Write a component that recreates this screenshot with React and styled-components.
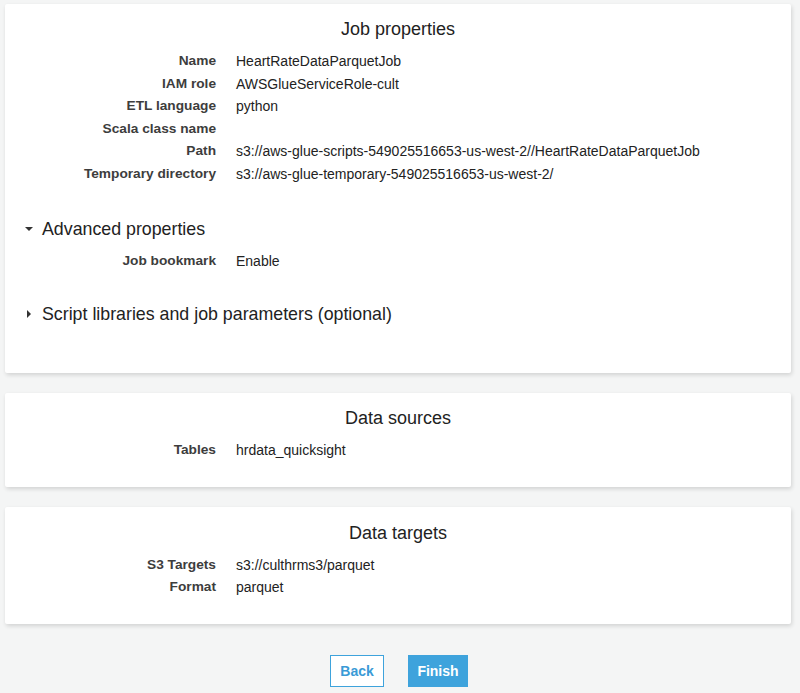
import React from 'react';
import styled, { createGlobalStyle } from 'styled-components';

const GlobalStyle = createGlobalStyle`
  html, body {
    margin: 0;
    padding: 0;
    background: #f4f5f5;
    font-family: "Liberation Sans", Arial, Helvetica, sans-serif;
    color: #222;
  }
`;

const jobProps = [
  ['Name', 'HeartRateDataParquetJob'],
  ['IAM role', 'AWSGlueServiceRole-cult'],
  ['ETL language', 'python'],
  ['Scala class name', ''],
  ['Path', 's3://aws-glue-scripts-549025516653-us-west-2//HeartRateDataParquetJob'],
  ['Temporary directory', 's3://aws-glue-temporary-549025516653-us-west-2/'],
];

const PropRows = ({ items }) => (
  <Rows>
    {items.map(([label, value]) => (
      <Row key={label}>
        <Label>{label}</Label>
        <Value>{value}</Value>
      </Row>
    ))}
  </Rows>
);

const App = () => {
  return (
    <Page>
      <GlobalStyle />
      <Card $top={14} $bottom={48}>
        <Title>Job properties</Title>
        <PropRows items={jobProps} />
        <Section $top={32} $after={10}>
          <Caret $open />
          <span>Advanced properties</span>
        </Section>
        <PropRows items={[['Job bookmark', 'Enable']]} />
        <Section $top={31} $after={0}>
          <Caret />
          <span>Script libraries and job parameters (optional)</span>
        </Section>
      </Card>

      <Card $top={14} $bottom={26}>
        <Title>Data sources</Title>
        <PropRows items={[['Tables', 'hrdata_quicksight']]} />
      </Card>

      <Card $top={15} $bottom={25}>
        <Title>Data targets</Title>
        <PropRows
          items={[
            ['S3 Targets', 's3://culthrms3/parquet'],
            ['Format', 'parquet'],
          ]}
        />
      </Card>

      <Actions>
        <Button $w={54}>Back</Button>
        <Button $w={60} $primary>Finish</Button>
      </Actions>
    </Page>
  );
};

export default App;

const Page = styled.div`
  padding: 4px 9px 6px 5px;
  display: flex;
  flex-direction: column;
  gap: 19.5px;
`;

const Card = styled.div`
  background: #fff;
  padding: ${(p) => p.$top}px 0 ${(p) => p.$bottom}px;
  box-shadow: 1px 2px 4px rgba(0, 0, 0, 0.14);
  border-radius: 2px;
`;

const Title = styled.h2`
  margin: 0 0 10px;
  text-align: center;
  font-size: 18px;
  line-height: 22px;
  font-weight: 400;
  color: #222;
`;

const Rows = styled.div`
  display: flex;
  flex-direction: column;
`;

const Row = styled.div`
  display: grid;
  grid-template-columns: 211px 1fr;
  column-gap: 20px;
  line-height: 22.6px;
`;

const Label = styled.div`
  text-align: right;
  font-size: 13.7px;
  font-weight: 700;
  color: #3d3d3d;
`;

const Value = styled.div`
  font-size: 14px;
  color: #222;
  white-space: nowrap;
`;

const Section = styled.div`
  display: flex;
  align-items: center;
  margin: ${(p) => p.$top}px 0 ${(p) => p.$after}px;
  padding-left: 20px;
  font-size: 17.8px;
  line-height: 22px;
  color: #222;
`;

const Caret = styled.span`
  width: 17px;
  height: 10px;
  display: flex;
  align-items: center;
  justify-content: flex-start;
  &::before {
    content: '';
    display: block;
    ${(p) =>
      p.$open
        ? `border-left: 4px solid transparent;
           border-right: 4px solid transparent;
           border-top: 4px solid #333;
           margin-left: 0;`
        : `border-top: 4px solid transparent;
           border-bottom: 4px solid transparent;
           border-left: 4px solid #333;
           margin-left: 2px;`}
  }
`;

const Actions = styled.div`
  display: flex;
  justify-content: center;
  gap: 24px;
  margin-top: 12px;
  padding-left: 2px;
`;

const Button = styled.button`
  width: ${(p) => p.$w}px;
  height: 32px;
  padding: 0;
  font-family: "Liberation Sans", Arial, Helvetica, sans-serif;
  font-size: 14px;
  font-weight: 700;
  border: 1px solid #3ea3dc;
  background: ${(p) => (p.$primary ? '#3ea3dc' : '#fff')};
  color: ${(p) => (p.$primary ? '#fff' : '#3a9ad6')};
  border-radius: 0;
  cursor: pointer;
`;
